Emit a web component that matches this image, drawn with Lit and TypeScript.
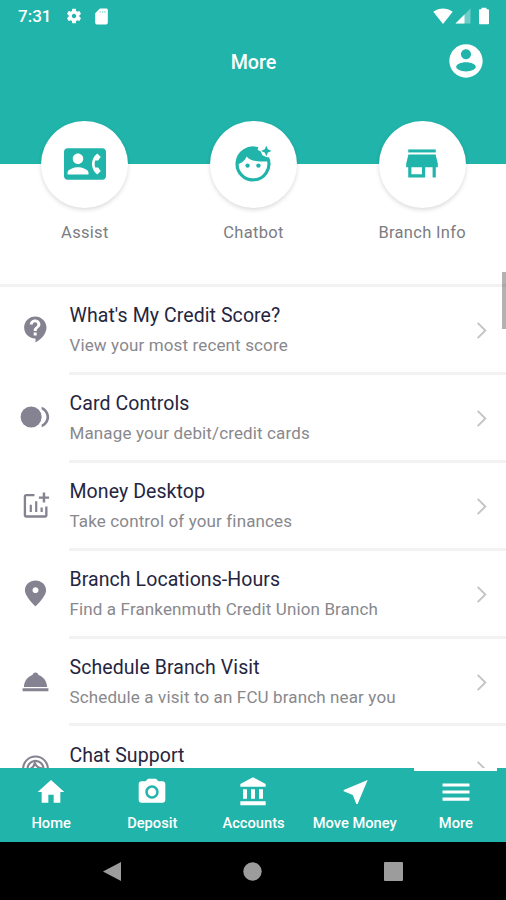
import { LitElement, html, css, svg } from "lit";
import { customElement } from "lit/decorators.js";

const icons: Record<string, any> = {
  settings: svg`<path d="M19.14 12.94c.04-.3.06-.61.06-.94 0-.32-.02-.64-.07-.94l2.03-1.58c.18-.14.23-.41.12-.61l-1.92-3.32c-.12-.22-.37-.29-.59-.22l-2.39.96c-.5-.38-1.03-.7-1.62-.94l-.36-2.54c-.04-.24-.24-.41-.48-.41h-3.84c-.24 0-.43.17-.47.41l-.36 2.54c-.59.24-1.13.57-1.62.94l-2.39-.96c-.22-.08-.47 0-.59.22L2.74 8.87c-.12.21-.08.47.12.61l2.03 1.58c-.05.3-.09.63-.09.94s.02.64.07.94l-2.03 1.58c-.18.14-.23.41-.12.61l1.92 3.32c.12.22.37.29.59.22l2.39-.96c.5.38 1.03.7 1.62.94l.36 2.54c.05.24.24.41.48.41h3.84c.24 0 .44-.17.47-.41l.36-2.54c.59-.24 1.13-.56 1.62-.94l2.39.96c.22.08.47 0 .59-.22l1.92-3.32c.12-.22.07-.47-.12-.61l-2.01-1.58zM12 15c-1.65 0-3-1.35-3-3s1.35-3 3-3 3 1.35 3 3-1.35 3-3 3z"/>`,
  sd: svg`<path d="M18 2h-8L4 8v12c0 1.100.9 2 2 2h12c1.100 0 2-.9 2-2V4c0-1.100-.9-2-2-2z"/><path class="notch" d="M9.500 5H11v2.500H9.500zM12.500 5H14v2.500h-1.500zM15.500 5H17v2.500h-1.500z"/>`,
  wifi: svg`<path d="M12.010 21.490 23.640 7c-.45-.34-4.930-4-11.640-4C5.280 3 .81 6.660.36 7l11.630 14.490.01.010z"/>`,
  signal: svg`<path opacity=".35" d="M2 22h20V2z"/><path d="M14 10 2 22h12z"/>`,
  battery: svg`<path d="M16.700 4H15V2H9v2H7.300C6.600 4 6 4.600 6 5.300v15.400c0 .7.600 1.300 1.300 1.300h9.400c.7 0 1.300-.6 1.300-1.300V5.300C18 4.600 17.400 4 16.700 4z"/>`,
  account: svg`<path fill-rule="evenodd" d="M12 2C6.480 2 2 6.480 2 12s4.480 10 10 10 10-4.480 10-10S17.520 2 12 2zm0 3c1.660 0 3 1.340 3 3s-1.340 3-3 3-3-1.340-3-3 1.340-3 3-3zm0 7.700c3.300 0 5.900 1.300 5.900 2.800s-2.600 2.800-5.900 2.800-5.900-1.300-5.900-2.800 2.600-2.800 5.900-2.800z"/>`,
  assist: svg`<path d="M22 3H2C.9 3 0 3.900 0 5v14c0 1.100.9 2 2 2h20c1.100 0 1.990-.9 1.990-2L24 5c0-1.100-.9-2-2-2zM8 6c1.660 0 3 1.340 3 3s-1.340 3-3 3-3-1.340-3-3 1.340-3 3-3zm6 12H2v-1c0-2 4-3.100 6-3.100s6 1.100 6 3.100v1zm3.850-4h1.640L21 16l-1.990 1.990c-1.310-.98-2.280-2.380-2.730-3.990-.18-.64-.28-1.310-.28-2s.1-1.360.28-2c.45-1.620 1.420-3.010 2.730-3.990L21 8l-1.510 2h-1.640c-.22.63-.35 1.300-.35 2s.13 1.370.35 2z"/>`,
  face: svg`<circle cx="8.900" cy="12.900" r="1.250"/><circle cx="15.100" cy="12.900" r="1.250"/><path fill="none" stroke="currentColor" stroke-width="1.800" d="M14.800 3.300A9.100 9.100 0 1 0 20.700 9.300"/><path d="M2.600 12.400C5.300 11.700 7.400 10.100 8.400 7.700c2 2.400 5.600 3.300 12.800 2.700l.2-2.100-1.900-.3-2.100-1-1.100-2.300-2.500-1.100C9 1 3 4.500 2.600 12.400z"/><path d="m19.600 7.500.9-2.100 2.100-.9-2.100-.9-.9-2.100-.9 2.100-2.100.9 2.100.9z"/>`,
  branch: svg`<path d="M3.300 2.800h17.400v1.900H3.300z"/><path fill-rule="evenodd" d="M20.600 6H3.400L2 11.800V14h1.300v6.500H14V14h4.700v6.500h2V14H22v-2.200zM5.300 14H12v4.500H5.300z"/>`,
  help: svg`<path fill-rule="evenodd" d="M11.800 2C7 2 3.200 5.810 3.200 10.500S7 19 11.500 19h.5v3c4.860-2.340 8.500-7 8.500-11.500C20.500 5.810 16.500 2 11.800 2zm1.100 14.600h-2.300v-2.200h2.300zm0-3.500h-2.300c0-3.250 2.800-3 2.800-5 0-1-.75-1.700-1.750-1.700s-1.750.7-1.750 1.700H7.600c0-2.210 1.790-3.900 4.050-3.900S15.800 5.900 15.800 8.100c0 2.500-2.900 2.750-2.900 5z"/>`,
  cards: svg`<circle cx="9.100" cy="12" r="7.900"/><path d="M17 4.300v2.100c2.100 1 3.600 3.200 3.600 5.600s-1.500 4.600-3.600 5.600v2.100c3.300-1.200 5.600-4.200 5.600-7.700S20.300 5.500 17 4.300z"/>`,
  chart: svg`<path d="M22.500 5v1.700h-3v3h-1.900v-3h-3V5h3V2h1.900v3zM19.500 19.600H4.700V4.800h6.500V3H4.700C3.700 3 2.900 3.800 2.900 4.800v14.800c0 1 .8 1.800 1.800 1.800h14.800c1 0 1.800-.8 1.800-1.800V12.800h-1.800zM15.900 17h1.700v-3.500h-1.700zM11.700 17h1.700V8.800h-1.700zM7.500 17h1.700v-5.500H7.500z"/>`,
  pin: svg`<path d="M12 2C7.500 2 3.800 5.300 3.800 9.500 3.800 14.500 12 22 12 22s8.200-7.500 8.200-12.500C20.200 5.300 16.500 2 12 2zm0 9.700c-1.300 0-2.300-1-2.300-2.300s1-2.300 2.300-2.300 2.300 1 2.300 2.300-1 2.300-2.300 2.300z"/>`,
  bell: svg`<path d="M2 17.300h20v2.300H2zM14.300 7c-.2-1.200-1.100-2-2.300-2s-2.100.8-2.300 2C5.900 8.100 3.300 11.800 3 16.200h18c-.3-4.400-2.900-8.100-6.700-9.200z"/>`,
  support: svg`<g fill="none" stroke="currentColor"><circle cx="12" cy="12.300" r="9.600" stroke-width="1.600"/><circle cx="12" cy="12.300" r="6.200" stroke-width="1.700"/><path stroke-width="1.700" d="M7 12.800c3-1 4-3 4.500-5 1 2.500 3 4 5.800 4"/></g>`,
  chevron: svg`<path fill="none" stroke="currentColor" stroke-width="2" d="m8 4 8 8-8 8"/>`,
  home: svg`<path d="M10 20v-6h4v6h5v-8h3L12 3 2 12h3v8z"/>`,
  camera: svg`<circle cx="12" cy="12" r="3.200"/><path d="M9 2 7.170 4H4c-1.100 0-2 .9-2 2v12c0 1.100.9 2 2 2h16c1.100 0 2-.9 2-2V6c0-1.100-.9-2-2-2h-3.170L15 2zm3 15c-2.760 0-5-2.240-5-5s2.240-5 5-5 5 2.240 5 5-2.240 5-5 5z"/>`,
  bank: svg`<path d="M4.500 10v7h3v-7zm6 0v7h3v-7zM2.500 22h19v-3h-19zm14-12v7h3v-7zM12 1 2.500 6v2h19V6z"/>`,
  send: svg`<path d="m21.500 3-18 7.530v.98l6.840 2.650L12.980 21h.98z"/>`,
  menu: svg`<path d="M1.900 5.600h20.200v2.300H1.900zm0 5.300h20.200v2.300H1.900zm0 5.300h20.200v2.300H1.900z"/>`,
};

const icon = (name: string) =>
  html`<svg class="icon ${name}" viewBox="0 0 24 24" fill="currentColor">${icons[name]}</svg>`;

const actions = [
  ["assist", "Assist"],
  ["face", "Chatbot"],
  ["branch", "Branch Info"],
];

const rows = [
  ["help", "What's My Credit Score?", "View your most recent score"],
  ["cards", "Card Controls", "Manage your debit/credit cards"],
  ["chart", "Money Desktop", "Take control of your finances"],
  ["pin", "Branch Locations-Hours", "Find a Frankenmuth Credit Union Branch"],
  ["bell", "Schedule Branch Visit", "Schedule a visit to an FCU branch near you"],
  ["support", "Chat Support", ""],
];

const tabs = [
  ["home", "Home"],
  ["camera", "Deposit"],
  ["bank", "Accounts"],
  ["send", "Move Money"],
  ["menu", "More"],
];

@customElement("app-root")
export class AppRoot extends LitElement {
  static styles = css`
    :host {
      display: flex;
      flex-direction: column;
      position: relative;
      height: 900px;
      overflow: hidden;
      background: #fff;
      font-family: Roboto, sans-serif;
    }
    * { box-sizing: border-box; }
    .icon { display: block; flex: none; width: 31px; height: 31px; }
    .header { flex: none; height: 163.500px; background: #20b4aa; color: #fff; }
    .status { display: flex; align-items: center; height: 32px; padding: 0 12px 0 18px; }
    .time { width: 47px; font-size: 17px; font-weight: 500; line-height: 32px; }
    .icon.settings { width: 18px; height: 18px; }
    .icon.sd { width: 19px; height: 19px; margin-left: 9px; }
    .notch { fill: #a5dfdb; }
    .icon.wifi { width: 20px; height: 20px; margin-left: auto; }
    .icon.signal { width: 18px; height: 18px; margin-left: 1px; }
    .icon.battery { width: 20px; height: 20px; margin-left: 2px; }
    .bar { display: grid; grid-template-columns: 1fr auto 1fr; align-items: center; height: 60px; padding: 0 20px 0 21px; }
    .title { grid-column: 2; padding-top: 2px; font-size: 19.700px; font-weight: 500; line-height: 24px; }
    .icon.account { width: 40px; height: 40px; justify-self: end; margin-bottom: 3px; }
    .actions { display: grid; grid-template-columns: repeat(3, 1fr); flex: none; height: 123.500px; border-bottom: 3px solid #f2f2f2; }
    .action { display: flex; flex-direction: column; align-items: center; margin-top: -43px; padding-left: 1px; }
    .disc { display: flex; align-items: center; justify-content: center; width: 87px; height: 87px; border-radius: 50%; background: #fff; color: #20b4aa; box-shadow: 0 2px 4px rgba(0, 0, 0, 0.14); }
    .icon.assist, .icon.face { width: 42px; height: 42px; }
    .icon.branch { width: 38px; height: 38px; }
    .label { margin-top: 15px; font-size: 16.500px; line-height: 20px; letter-spacing: 0.300px; color: #7c7c82; }
    .list { flex: 1; min-height: 0; overflow: hidden; }
    .row { display: flex; align-items: center; height: 87.900px; }
    .lead { display: flex; justify-content: center; flex: none; width: 69px; padding: 0 0 3px 1px; color: #858391; }
    .icon.cards { width: 32px; height: 32px; }
    .body { display: flex; flex: 1; align-items: center; height: 100%; border-bottom: 3px solid #f2f2f2; padding-right: 13px; }
    .texts { flex: 1; padding: 1px 0 0 0.500px; white-space: nowrap; }
    .name { font-size: 19.500px; line-height: 26px; letter-spacing: 0.080px; color: #25253f; }
    .sub { min-height: 22px; margin-top: 5px; font-size: 17px; line-height: 22px; letter-spacing: 0.130px; color: #88888d; }
    .icon.chevron { width: 23px; height: 23px; margin-top: 2px; color: #c4c4c4; }
    .tabs { display: grid; grid-template-columns: repeat(5, 1fr); flex: none; height: 74px; background: #20b4aa; color: #fff; }
    .tab { display: flex; flex-direction: column; align-items: center; padding: 5px 0 0 1px; border-top: 3px solid transparent; }
    .tab .icon { width: 32px; height: 32px; }
    .tab.on { background: linear-gradient(#fff, #fff) 9.500px top / 83px 3px no-repeat border-box; }
    .tabname { margin-top: 6px; font-size: 14.700px; font-weight: 500; line-height: 18px; white-space: nowrap; }
    .system { display: flex; justify-content: center; flex: none; height: 58px; background: #000; color: #9c9c9c; }
    .keys { width: 422px; display: grid; grid-template-columns: repeat(3, 1fr); place-items: center; }
    .key { width: 21px; height: 21px; fill: currentColor; }
    .thumb { position: absolute; right: 0; top: 272px; width: 4px; height: 57px; background: rgba(0, 0, 0, 0.3); }
  `;

  render() {
    return html`
      <div class="header">
        <div class="status">
          <span class="time">7:31</span>${icon("settings")}${icon("sd")}
          ${icon("wifi")}${icon("signal")}${icon("battery")}
        </div>
        <div class="bar"><span class="title">More</span>${icon("account")}</div>
      </div>
      <div class="actions">
        ${actions.map(([i, t]) => html`<div class="action"><div class="disc">${icon(i)}</div><span class="label">${t}</span></div>`)}
      </div>
      <div class="list">
        ${rows.map(([i, t, s]) => html`<div class="row">
          <div class="lead">${icon(i)}</div>
          <div class="body"><div class="texts"><div class="name">${t}</div><div class="sub">${s}</div></div>${icon("chevron")}</div>
        </div>`)}
      </div>
      <div class="tabs">
        ${tabs.map(([i, t]) => html`<div class="tab ${t === "More" ? "on" : ""}">${icon(i)}<span class="tabname">${t}</span></div>`)}
      </div>
      <div class="system"><div class="keys">
        <svg class="key" viewBox="0 0 21 21"><path d="M19 1v19L1 10.500z"/></svg>
        <svg class="key" viewBox="0 0 21 21"><circle cx="10.500" cy="10.500" r="9.200"/></svg>
        <svg class="key" viewBox="0 0 21 21"><rect x="1" y="1" width="19" height="19" rx="1"/></svg>
      </div></div>
      <div class="thumb"></div>
    `;
  }
}
